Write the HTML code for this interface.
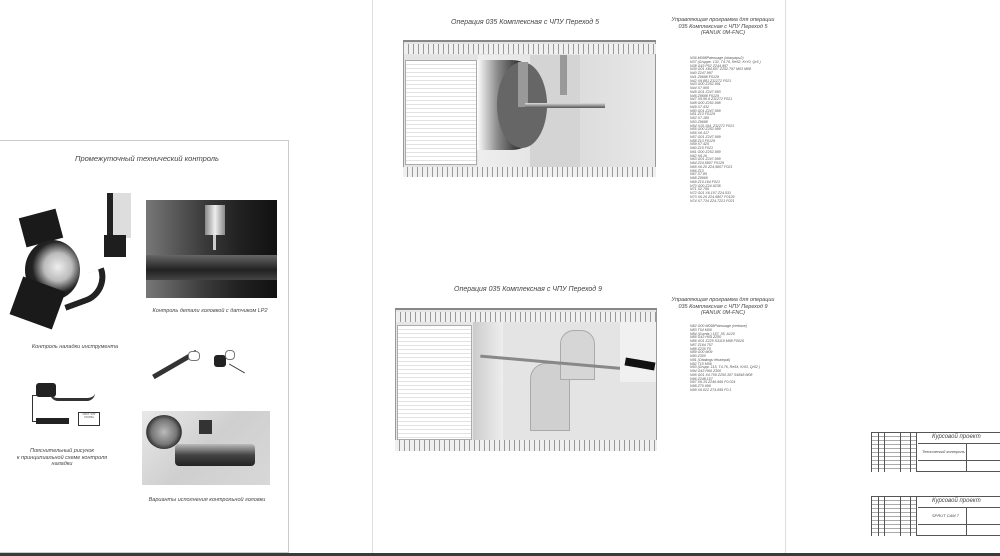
<!DOCTYPE html>
<html><head><meta charset="utf-8"><style>
*{margin:0;padding:0;box-sizing:border-box}
body{width:1000px;height:556px;overflow:hidden;background:#fff;position:relative;font-family:"Liberation Sans","DejaVu Sans",sans-serif;font-style:italic;color:#444}
.a{position:absolute}
.t{position:absolute;white-space:nowrap;text-align:center;transform:translateX(-50%)}
.code{position:absolute;font-size:3.6px;line-height:3.75px;color:#555;white-space:pre;font-style:italic}
.lst{background:repeating-linear-gradient(#fff 0,#fff 3px,#e2e2e2 3px,#e2e2e2 4px)}
.tb{position:absolute;width:130px;height:40px;border:1px solid #555;background:#fff}
.tb div{position:absolute;white-space:nowrap}
.bar{background:repeating-linear-gradient(90deg,#f0f0f0 0,#f0f0f0 4px,#999 4px,#999 5px)}
</style></head><body>
<div class="a" style="left:0;top:140px;width:289px;height:413px;border:1px solid #ccc;border-left:none"></div>
<div class="a" style="left:372px;top:0;width:1px;height:553px;background:#ddd"></div>
<div class="a" style="left:785px;top:0;width:1px;height:553px;background:#ddd"></div>
<div class="a" style="left:0;top:553px;width:1000px;height:3px;background:#3a3a3a"></div>

<div class="t" style="left:147px;top:154px;font-size:7.5px;color:#444">Промежуточный технический контроль</div>
<div class="a" style="left:22px;top:213px;width:38px;height:30px;background:#1a1a1a;transform:rotate(-15deg)"></div>
<div class="a" style="left:25px;top:240px;width:55px;height:60px;border-radius:50%;background:radial-gradient(circle at 60% 45%,#eee 0,#bbb 30%,#222 55%,#111 100%)"></div>
<div class="a" style="left:15px;top:283px;width:45px;height:40px;background:#1a1a1a;transform:rotate(20deg)"></div>
<div class="a" style="left:60px;top:275px;width:50px;height:28px;border:6px solid #222;border-top:none;border-left:none;border-radius:0 0 40px 0;transform:rotate(-20deg)"></div>
<div class="a" style="left:107px;top:193px;width:24px;height:45px;background:#ddd;border-left:6px solid #222"></div>
<div class="a" style="left:104px;top:235px;width:22px;height:22px;background:#1e1e1e"></div>
<div class="a" style="left:146px;top:200px;width:131px;height:98px;background:linear-gradient(90deg,#777 0,#555 25%,#3a3a3a 45%,#222 70%,#111 100%)"></div>
<div class="a" style="left:146px;top:255px;width:131px;height:25px;background:linear-gradient(#666,#222 60%,#444)"></div>
<div class="a" style="left:205px;top:205px;width:20px;height:30px;background:linear-gradient(90deg,#888,#eee,#888)"></div>
<div class="a" style="left:213px;top:235px;width:3px;height:15px;background:#ccc"></div>
<div class="t" style="left:210px;top:308px;font-size:5.5px">Контроль детали головкой с датчиком LP2</div>
<div class="t" style="left:75px;top:344px;font-size:5.5px">Контроль наладки инструмента</div>
<div class="a" style="left:150px;top:362px;width:50px;height:5px;background:#333;transform:rotate(-30deg)"></div>
<div class="a" style="left:188px;top:351px;width:12px;height:10px;border:1px solid #777;border-radius:4px;background:#fff"></div>
<div class="a" style="left:214px;top:355px;width:12px;height:12px;background:#222;border-radius:3px"></div>
<div class="a" style="left:225px;top:350px;width:10px;height:10px;border:1px solid #777;border-radius:4px"></div>
<div class="a" style="left:228px;top:368px;width:18px;height:1px;background:#333;transform:rotate(30deg)"></div>
<div class="a" style="left:36px;top:383px;width:20px;height:14px;background:#222;border-radius:3px"></div>
<div class="a" style="left:50px;top:393px;width:45px;height:8px;border-bottom:3px solid #333;border-radius:0 0 20px 20px"></div>
<div class="a" style="left:32px;top:395px;width:5px;height:27px;border:1px solid #333;border-right:none"></div>
<div class="a" style="left:36px;top:418px;width:33px;height:6px;background:#222"></div>
<div class="a" style="left:78px;top:412px;width:22px;height:14px;border:1px solid #333;font-size:2.5px;text-align:center;font-style:normal">СИСТ. ЧПУ СТАНКА</div>
<div class="t" style="left:62px;top:448px;font-size:5.5px;line-height:6.5px">Пояснительный рисунок<br>к принципиальной схеме контроля<br>наладки</div>
<div class="a" style="left:142px;top:411px;width:128px;height:74px;background:linear-gradient(135deg,#e8e8e8,#cfcfcf 50%,#d8d8d8)"></div>
<div class="a" style="left:146px;top:415px;width:36px;height:34px;border-radius:50%;background:radial-gradient(circle,#bbb 0,#777 50%,#333 70%,#bbb 75%)"></div>
<div class="a" style="left:175px;top:444px;width:80px;height:22px;background:linear-gradient(#bbb,#444 50%,#222);border-radius:4px"></div>
<div class="a" style="left:199px;top:420px;width:13px;height:14px;background:#333"></div>
<div class="t" style="left:207px;top:497px;font-size:5.5px">Варианты исполнения контрольной головки</div>

<div class="t" style="left:525px;top:19px;font-size:7px">Операция 035 Комплексная с ЧПУ Переход 5</div>
<div class="a" style="left:403px;top:40px;width:253px;height:137px;background:#e4e4e4;border:1px solid #999"></div>
<div class="a" style="left:403px;top:40px;width:253px;height:2px;background:#888"></div>
<div class="a bar" style="left:404px;top:44px;width:252px;height:10px"></div>
<div class="lst a" style="left:405px;top:60px;width:72px;height:105px;border:1px solid #aaa"></div>
<div class="a" style="left:478px;top:55px;width:177px;height:112px;background:linear-gradient(90deg,#eee 0,#ddd 60%,#e8e8e8 100%)"></div>
<div class="a" style="left:530px;top:55px;width:50px;height:112px;background:#d4d4d4"></div>
<div class="a" style="left:477px;top:60px;width:70px;height:90px;border-radius:0 50% 50% 0/0 50% 50% 0;background:linear-gradient(90deg,#fff 0,#888 30%,#333 60%,#555)"></div>
<div class="a" style="left:497px;top:62px;width:50px;height:86px;border-radius:50%;background:#666"></div>
<div class="a" style="left:518px;top:62px;width:10px;height:45px;background:#999"></div>
<div class="a" style="left:525px;top:103px;width:80px;height:5px;background:linear-gradient(#ddd,#555)"></div>
<div class="a" style="left:560px;top:55px;width:7px;height:40px;background:#999"></div>
<div class="a bar" style="left:403px;top:167px;width:253px;height:10px"></div>

<div class="t" style="left:723px;top:17px;font-size:5.5px;line-height:6.5px">Управляющая программа для операции<br>035 Комплексная с ЧПУ Переход 5<br>(FANUK 0M-FNC)</div>
<div class="code" style="left:690px;top:57px">N36 M098Patrouage (okarpapu2)
N37 (Gruppe. 132, T4.76, Re52, KrY0, Qr5 )
N38 G43 P02 Z244.997
N39 G01 X84,657 Z252.797 M03 M08
N40 Z247.997
N41 Z9698 F0129
N42 X9,881 Z11272 F021
N43 G00 Z252.991
N44 X7.906
N45 G01 Z247.993
N46 Z9698 F0129
N47 X9,56.9 Z11272 F021
N48 G00 Z252.998
N49 X7.432
N50 G01 Z247.999
N51 Z13 F0129
N52 X7.185
N53 Z9698
N54 X10,164, Z11272 F021
N55 G00 Z252.999
N56 X6.417
N57 G01 Z247.999
N58 Z13 F0129
N59 X7.425
N60 Z15 F021
N61 G00 Z252.999
N62 X6.16
N63 G01 Z247.999
N64 Z24,5807 F0129
N65 X6.20 Z24,5807 F021
N66 Z13
N67 X7.85
N68 Z9966
N69 Z10.164 F021
N70 G00 Z24.9238
N71 X2.795
N72 G01 X6.107 Z24.531
N73 X6.26 Z24.5807 F0129
N74 X7.734 Z24.7221 F021</div>

<div class="t" style="left:528px;top:286px;font-size:7px">Операция 035 Комплексная с ЧПУ Переход 9</div>
<div class="a" style="left:395px;top:308px;width:262px;height:143px;background:#e6e6e6;border:1px solid #999"></div>
<div class="a" style="left:395px;top:308px;width:262px;height:2px;background:#888"></div>
<div class="a bar" style="left:396px;top:312px;width:260px;height:10px"></div>
<div class="lst a" style="left:397px;top:325px;width:75px;height:115px;border:1px solid #aaa"></div>
<div class="a" style="left:473px;top:322px;width:183px;height:118px;background:#e4e4e4"></div>
<div class="a" style="left:473px;top:322px;width:30px;height:118px;background:linear-gradient(90deg,#ccc,#eee)"></div>
<div class="a" style="left:530px;top:363px;width:40px;height:68px;background:#d0d0d0;border:1px solid #aaa;border-radius:16px 16px 0 0"></div>
<div class="a" style="left:560px;top:330px;width:35px;height:50px;background:#d6d6d6;border:1px solid #aaa;border-radius:14px 14px 0 0"></div>
<div class="a" style="left:480px;top:362px;width:170px;height:3px;background:#888;transform:rotate(5deg)"></div>
<div class="a" style="left:620px;top:322px;width:36px;height:60px;background:#f0f0f0"></div>
<div class="a" style="left:625px;top:360px;width:30px;height:8px;background:#111;transform:rotate(10deg)"></div>
<div class="a bar" style="left:395px;top:440px;width:262px;height:11px"></div>

<div class="t" style="left:723px;top:297px;font-size:5.5px;line-height:6.5px">Управляющая программа для операции<br>035 Комплексная с ЧПУ Переход 9<br>(FANUK 0M-FNC)</div>
<div class="code" style="left:690px;top:325px">N82 G00 M098Patrouage (vertiaxe)
N83 T04 M06
N84 (Gumla ) 157, 35, A120
N85 G43 H04 Z250
N86 G01 Z225 S3119 M08 F0026
N87 Z164.757
N88 Z235 F0
N89 G00 M09
N90 Z300
N91 (Ottakngu lekarnpal)
N92 T10 M06
N93 (Grupp. 115, T4.76, Re54, Kr93, Qr52 )
N94 G43 H06 Z300
N95 G01 X4.709 Z250.307 S4848 M08
N96 Z248.107
N97 X6.15 Z246.666 F0.024
N98 Z70.999
N99 X6.022 Z74.699 F0.1</div>

<div class="tb" style="left:871px;top:432px">
<div style="left:0;top:0;width:45px;height:39px;background:repeating-linear-gradient(#fff 0,#fff 3px,#aaa 3px,#aaa 4px);border-right:1px solid #555"></div>
<div style="left:6px;top:0;width:1px;height:39px;background:#555"></div><div style="left:12px;top:0;width:1px;height:39px;background:#555"></div><div style="left:28px;top:0;width:1px;height:39px;background:#555"></div><div style="left:38px;top:0;width:1px;height:39px;background:#555"></div>
<div style="left:46px;top:10px;width:84px;height:1px;background:#555"></div>
<div style="left:46px;top:27px;width:84px;height:1px;background:#555"></div>
<div style="left:94px;top:10px;width:1px;height:29px;background:#555"></div>
<div style="left:60px;top:1px;font-size:6px">Курсовой проект</div>
<div style="left:50px;top:16px;font-size:4px">Технический контроль</div>
</div>
<div class="tb" style="left:871px;top:496px">
<div style="left:0;top:0;width:45px;height:39px;background:repeating-linear-gradient(#fff 0,#fff 3px,#aaa 3px,#aaa 4px);border-right:1px solid #555"></div>
<div style="left:6px;top:0;width:1px;height:39px;background:#555"></div><div style="left:12px;top:0;width:1px;height:39px;background:#555"></div><div style="left:28px;top:0;width:1px;height:39px;background:#555"></div><div style="left:38px;top:0;width:1px;height:39px;background:#555"></div>
<div style="left:46px;top:10px;width:84px;height:1px;background:#555"></div>
<div style="left:46px;top:27px;width:84px;height:1px;background:#555"></div>
<div style="left:94px;top:10px;width:1px;height:29px;background:#555"></div>
<div style="left:60px;top:1px;font-size:6px">Курсовой проект</div>
<div style="left:60px;top:16px;font-size:4px">SPRUT CAM 7</div>
</div>
</body></html>
